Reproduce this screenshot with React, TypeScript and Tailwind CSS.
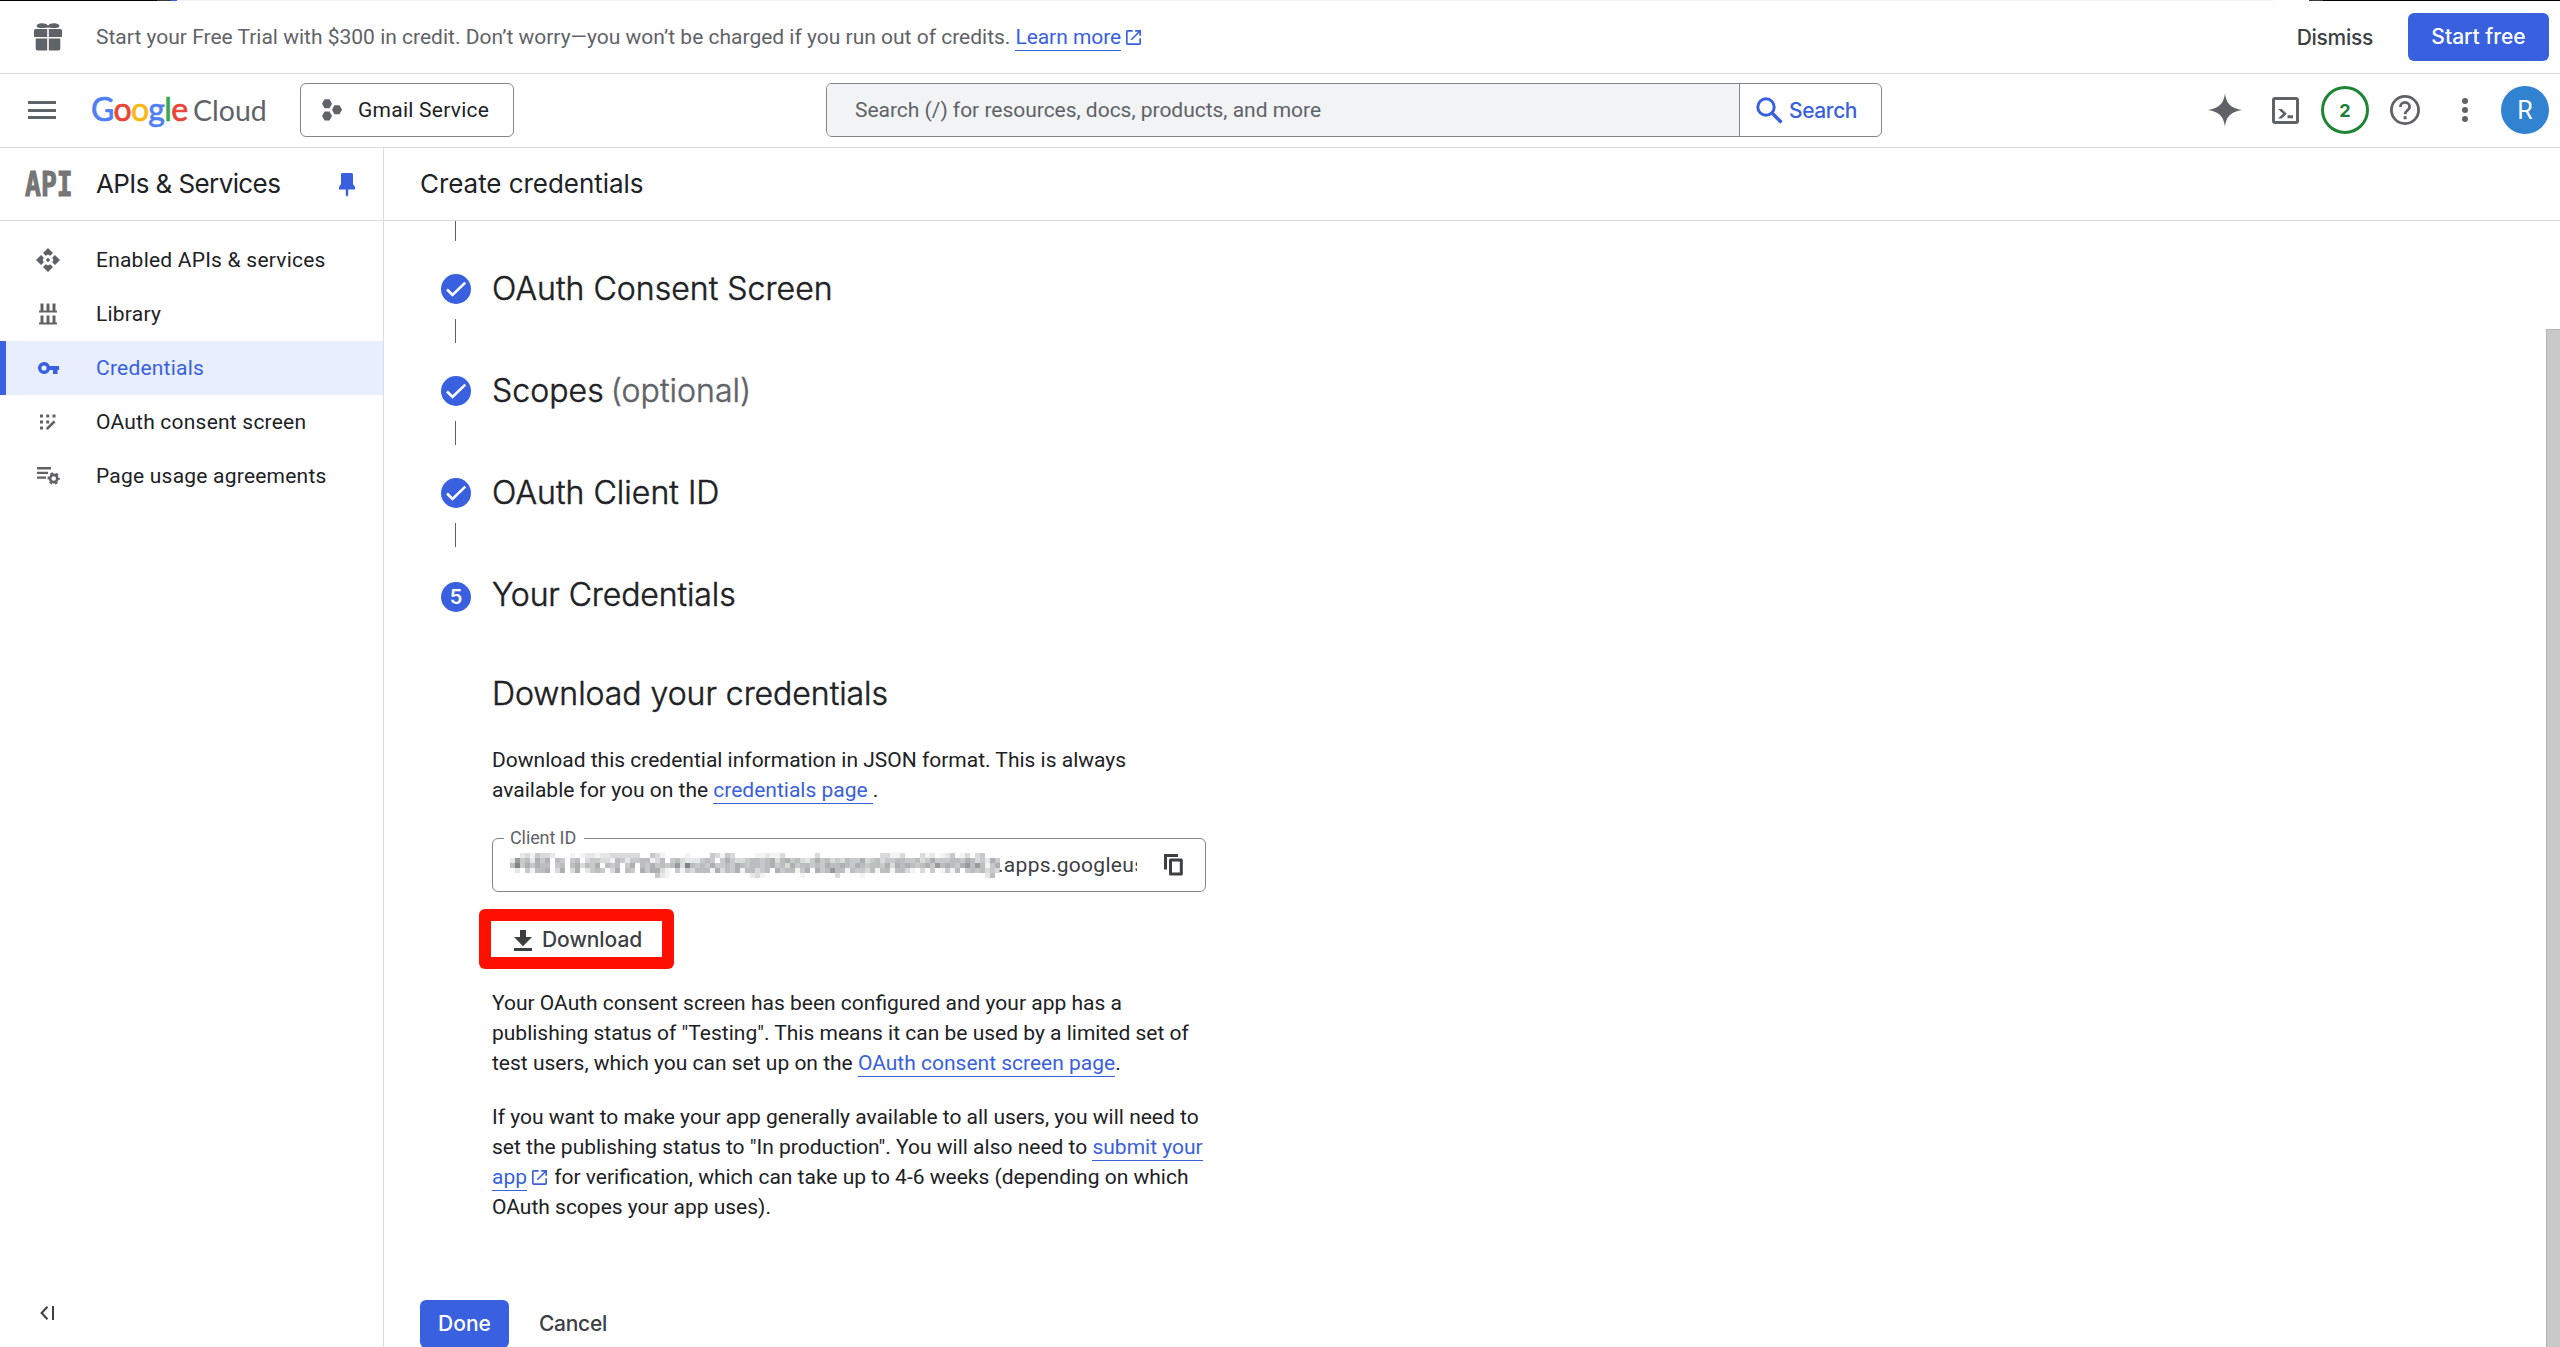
import React from "react";

const OpenInNew = ({ className = "" }: { className?: string }) => (
  <svg viewBox="0 0 18 18" className={"inline-block " + className} fill="currentColor">
    <path d="M2 0h6v2H2v14h14v-6h2v6a2 2 0 0 1-2 2H2a2 2 0 0 1-2-2V2a2 2 0 0 1 2-2z" />
    <path d="M11 0h7v7h-2V3.400L7 12.400 5.600 11l9-9H11z" />
  </svg>
);

const Gift = () => (
  <svg viewBox="0 0 28 28" className="h-7 w-7" fill="#5f6368">
    <path d="M14 4.600C12 5.200 3 5.600 2.600 3.600 2.500 1 5 .2 8 .2c3 0 4.600.8 6 2.200C15.400 1 17 .2 20 .2c3 0 5.500.8 5.400 3.400-.4 2-9.400 1.600-11.400 1z" />
    <path d="M1.500 6h11.700v8H0V7.500A1.500 1.500 0 0 1 1.500 6zM14.800 6h11.700A1.500 1.500 0 0 1 28 7.500V14H14.800zM1.700 15.600h11.500v12H3.700a2 2 0 0 1-2-2zM14.800 15.600h11.500v10a2 2 0 0 1-2 2h-9.500z" />
  </svg>
);

const Projects = () => (
  <svg viewBox="0 0 20 22" className="h-[22px] w-5" fill="#5f6368">
    <path d="M2.500.2h5L10 4.700 7.500 9.200h-5L0 4.700zM12.500 6.300h5l2.500 4.500-2.500 4.500h-5L10 10.800zM2.500 12.500h5L10 17l-2.500 4.500h-5L0 17z" />
  </svg>
);

const Pin = () => (
  <svg viewBox="0 0 16 24" className="mt-[2px] h-6 w-4" fill="#3860df">
    <path d="M3.500 0h9a1.500 1.500 0 0 1 1.500 1.500V11l2 3v2.500H9.200V22L8 24l-1.200-2v-5.500H0V14l2-3V1.500A1.500 1.500 0 0 1 3.500 0z" />
  </svg>
);

const ApiIcon = () => (
  <svg viewBox="0 0 24 24" className="h-6 w-6" fill="#5f6368">
    <path d="M12 0l5 5-2.800 2.800L12 6.600 9.800 7.800 7 5zM12 24l-5-5 2.800-2.800L12 17.400l2.200-1.200L17 19zM0 12l5-5 2.800 2.800L6.600 12l1.200 2.200L5 17zM24 12l-5 5-2.800-2.800 1.200-2.200-1.200-2.200L19 7zM12 9.800l2.200 2.200-2.200 2.200L9.800 12z" />
  </svg>
);

const LibraryIcon = () => (
  <svg viewBox="0 0 18 22" className="h-[22px] w-[18px]" fill="#5f6368">
    <path d="M1.500 0.500h3v7h-3zM7.500 0.500h3v7h-3zM13.500 0.500h3v7h-3zM0 7.500h18v2H0zM1.500 12.500h3v7h-3zM7.500 12.500h3v7h-3zM13.500 12.500h3v7h-3zM0 19.500h18v2H0z" />
  </svg>
);

const KeyIcon = () => (
  <svg viewBox="0 0 21 12" className="h-3 w-[21px]" fill="#3860df" fillRule="evenodd">
    <path d="M6 0a6 6 0 0 1 5.700 4H21v4h-1.500v4H15V8h-3.300A6 6 0 1 1 6 0zm0 3.400a2.600 2.600 0 1 0 0 5.200 2.600 2.600 0 0 0 0-5.200z" />
  </svg>
);

const ConsentIcon = () => (
  <svg viewBox="0 0 16 16" className="h-4 w-4" fill="#5f6368">
    <path d="M0 .5h3v3H0zM6.200 .5h3v3h-3zM12.500 .5h3v3h-3zM0 6.500h3v3H0zM6.200 6.500h3v3h-3zM0 12.500h3v3H0zM13.600 6.400l2 1.800-7.400 7.400H6.200v-1.900z" />
  </svg>
);

const AgreementsIcon = () => (
  <svg viewBox="0 0 23 18" className="h-[18px] w-[23px]" fill="#5f6368">
    <path d="M0 0h14v2.400H0zM0 4.700h11v2.400H0zM0 9.400h9v2.400H0z" />
    <circle cx="16.700" cy="11.500" r="3.600" fill="none" stroke="#5f6368" strokeWidth="2.600" />
    <circle cx="16.700" cy="11.500" r="5.300" fill="none" stroke="#5f6368" strokeWidth="1.800" strokeDasharray="2.800 2.750" strokeDashoffset="1.400" />
  </svg>
);

const navItems = [
  { label: "Enabled APIs & services", icon: <ApiIcon /> },
  { label: "Library", icon: <LibraryIcon /> },
  { label: "Credentials", icon: <KeyIcon />, active: true },
  { label: "OAuth consent screen", icon: <ConsentIcon /> },
  { label: "Page usage agreements", icon: <AgreementsIcon /> },
];

const CheckBadge = () => (
  <svg viewBox="0 0 30 30" className="h-[30px] w-[30px] shrink-0">
    <circle cx="15" cy="15" r="15" fill="#3860df" />
    <path d="M6 15.500l5.500 5.500L24.300 8.600" fill="none" stroke="#fff" strokeWidth="2.600" />
  </svg>
);

const steps: { title: string; note?: string }[] = [
  { title: "OAuth Consent Screen" },
  { title: "Scopes", note: "(optional)" },
  { title: "OAuth Client ID" },
];

/* Redacted part of the client id: every digit is the darkness of one 5px cell. */
const mosaic = [
  "00231433200010122122333333004310000100004314300001121130000003000000000000331130003120124013034000",
  "27452646054045034433154244551350453222454046433455456356453246453435446345344554453464445546534264",
  "58464655045056354605450460546454573854546445465455456453645545465565465455463656545647565467575146",
  "02041556036036024540360540646631041435551635461553450645514606457551544351551553103040141504545343",
  "00000000000000000000000000000421000000000000000023100000001000000300001000000000000000000000000250",
];
const shades = ["#ffffff", "#f3f3f4", "#e6e7e7", "#d9dada", "#c8c9ca", "#bcbdbe", "#aeafb1", "#98999b", "#828385"];

const Mosaic = () => (
  <svg viewBox="0 0 98 5" className="mt-px h-[25px] w-[490px] shrink-0" shapeRendering="crispEdges">
    {mosaic.map((row, y) =>
      row
        .slice(0, 98)
        .split("")
        .map((d, x) => (d === "0" ? null : <rect key={x + "-" + y} x={x} y={y} width="1" height="1" fill={shades[Number(d)]} />))
    )}
  </svg>
);

const Link = ({ children }: { children: React.ReactNode }) => (
  <a className="border-b border-[#3860df] pb-px whitespace-pre text-[#3860df]">{children}</a>
);

export default function App() {
  return (
    <div className="flex h-[1347px] w-full flex-col overflow-hidden bg-white font-['Roboto',sans-serif] text-[21px] text-[#202124]">
      <div className="flex h-px shrink-0">
        <div className="w-[157px] bg-black" />
        <div className="w-[14px] bg-[#3a3c40]" />
        <div className="w-[6px] bg-[#3860df]" />
        <div className="flex-1 bg-[#f1f2f3]" />
        <div className="w-[36px] bg-white" />
        <div className="w-[14px] bg-[#3a3c40]" />
        <div className="w-[237px] bg-black" />
      </div>

      <div className="flex h-[73px] shrink-0 items-center border-b border-[#dadce0] pr-[11px] pl-[34px]">
        <Gift />
        <div className="mt-px ml-[34px] flex flex-1 items-center text-[#5f6368]">
          <span className="mr-[5px] whitespace-pre">
            Start your Free Trial with $300 in credit. Don’t worry—you won’t be charged if you run out of credits.
          </span>
          <span className="border-b border-[#3860df] leading-[26px] tracking-[-0.05px] whitespace-pre text-[#3860df]">Learn more</span>
          <OpenInNew className="ml-[5px] h-[15px] w-[15px] text-[#3860df]" />
        </div>
        <span className="mt-px mr-[35px] font-['Inter',sans-serif] font-medium tracking-[-0.3px] text-[#3c4043]">Dismiss</span>
        <div className="flex h-12 w-[141px] items-center justify-center rounded-[6px] bg-[#3860df] font-['Inter',sans-serif] font-medium text-white">
          Start free
        </div>
      </div>

      <header className="flex h-[74px] shrink-0 items-center border-b border-[#dadce0] pr-[11px] pb-px pl-7">
        <div className="flex h-[18px] w-7 flex-col justify-between">
          <div className="h-[3px] bg-[#5f6368]" />
          <div className="h-[3px] bg-[#5f6368]" />
          <div className="h-[3px] bg-[#5f6368]" />
        </div>
        <div className="mb-[2px] ml-[35px] flex w-[209px] items-baseline font-['Lato',sans-serif] leading-[40px] whitespace-pre">
          <span className="w-[102px] text-[32px] tracking-[-0.7px]">
            <span className="text-[#4f7ff5] [-webkit-text-stroke:0.700px]">G</span>
            <span className="text-[#ea4335] [-webkit-text-stroke:0.700px]">o</span>
            <span className="text-[#f5b912] [-webkit-text-stroke:0.700px]">o</span>
            <span className="text-[#4f7ff5] [-webkit-text-stroke:0.700px]">g</span>
            <span className="text-[#34a853] [-webkit-text-stroke:0.700px]">l</span>
            <span className="text-[#ea4335] [-webkit-text-stroke:0.700px]">e</span>
          </span>
          <span className="text-[28.500px] text-[#5f6368]">Cloud</span>
        </div>
        <div className="flex h-[54px] w-[214px] items-center rounded-[6px] border border-[#80868b] pl-[21px]">
          <Projects />
          <span className="mt-px ml-4 tracking-[0.26px] whitespace-pre">Gmail Service</span>
        </div>
        <div className="ml-[312px] flex h-[54px] w-[1056px] overflow-hidden rounded-[6px] border border-[#80868b]">
          <div className="flex flex-1 items-center border-r border-[#80868b] bg-[#f1f3f4] pt-px pl-7 tracking-[-0.02px] whitespace-pre text-[#5f6368]">
            Search (/) for resources, docs, products, and more
          </div>
          <div className="flex w-[141px] items-center pl-4 text-[#3860df]">
            <svg viewBox="0 0 27 27" className="h-[27px] w-[27px]" fill="none" stroke="#3860df">
              <circle cx="10" cy="10" r="8.200" strokeWidth="3" />
              <path d="M16 16l9.500 9.500" strokeWidth="3.400" />
            </svg>
            <span className="mt-px ml-[6px] font-['Inter',sans-serif] font-medium tracking-[-0.4px]">Search</span>
          </div>
        </div>
        <div className="flex flex-1 items-center justify-end">
          <svg viewBox="0 0 34 34" className="h-[34px] w-[34px]" fill="#5f6368">
            <path d="M17 0c.8 7.500 3.500 15 17 17-13.500 2-16.200 9.500-17 17-.8-7.500-3.500-15-17-17 13.500-2 16.200-9.500 17-17z" />
            <path d="M17 4c2 7 5 11 13 13-8 2-11 6-13 13-2-7-5-11-13-13 8-2 11-6 13-13z" />
          </svg>
          <svg viewBox="0 0 27 27" className="mt-px ml-[30px] h-[27px] w-[27px]">
            <rect x="1.500" y="1.500" width="24" height="24" rx="1.500" fill="none" stroke="#5f6368" strokeWidth="3" />
            <path d="M6 12h3.800l5 4.700-5 4.700H6l5-4.700zM15.500 18.300H21v3h-5.500z" fill="#5f6368" />
          </svg>
          <div className="ml-[22px] flex h-12 w-12 items-center justify-center rounded-full border-[3px] border-[#1e8535] font-['Inter',sans-serif] text-[18px] font-bold text-[#188038]">
            2
          </div>
          <svg viewBox="0 0 30 30" className="ml-[21px] h-[30px] w-[30px]" fill="none" stroke="#5f6368">
            <circle cx="15" cy="15" r="13.600" strokeWidth="2.800" />
            <path d="M10.400 12a4.600 4.600 0 1 1 9.200 0c0 3.200-4.500 3.400-4.500 7.200" strokeWidth="2.800" />
            <path d="M13.600 21.200h3v3h-3z" fill="#5f6368" stroke="none" />
          </svg>
          <svg viewBox="0 0 6 24" className="ml-[42px] h-6 w-[6px]" fill="#5f6368">
            <circle cx="3" cy="3" r="3" />
            <circle cx="3" cy="12" r="3" />
            <circle cx="3" cy="21" r="3" />
          </svg>
          <div className="ml-[33px] flex h-12 w-12 items-center justify-center rounded-full bg-[#3182d1] pt-px text-[25px] text-white">R</div>
        </div>
      </header>

      <div className="flex min-h-0 flex-1">
        <aside className="flex w-[384px] shrink-0 flex-col border-r border-[#dadce0]">
          <div className="flex h-[73px] shrink-0 items-center border-b border-[#dadce0] pl-[25px]">
            <div className="w-[71px]">
              <span className="mt-[6px] inline-block origin-left scale-x-[0.8] font-['DejaVu_Sans_Mono',monospace] text-[33px] leading-none font-bold text-[#757575] [-webkit-text-stroke:1px_#757575]">API</span>
            </div>
            <span className="w-[243px] pb-px font-['Inter',sans-serif] text-[26px] tracking-[-0.600px] whitespace-pre">APIs &amp; Services</span>
            <Pin />
          </div>
          <nav className="mt-3 flex flex-1 flex-col">
            {navItems.map((item) => (
              <div
                key={item.label}
                className={
                  item.active
                    ? "flex h-[54px] items-center border-l-[6px] border-[#3860df] bg-[#e8eefe] text-[#3860df]"
                    : "flex h-[54px] items-center border-l-[6px] border-transparent"
                }
              >
                <div className="ml-[22px] flex w-[40px] justify-center">{item.icon}</div>
                <span className="mt-[2px] ml-7 tracking-[0.22px] whitespace-pre">{item.label}</span>
              </div>
            ))}
          </nav>
          <svg viewBox="0 0 14 14" className="mb-[27px] ml-10 h-[14px] w-[14px] shrink-0" fill="none" stroke="#3c4043" strokeWidth="2">
            <path d="M7.500 .8L1.600 7l5.900 6.200M13 0v14" />
          </svg>
        </aside>

        <main className="flex min-w-0 flex-1 flex-col">
          <div className="flex h-[73px] shrink-0 items-center border-b border-[#dadce0] pb-px pl-9 font-['Inter',sans-serif] text-[26px] tracking-[-0.05px] whitespace-pre">
            Create credentials
          </div>
          <div className="flex min-h-0 flex-1">
            <div className="flex flex-1 flex-col">
              <div className="flex flex-col pl-[57px]">
                <div className="mb-[33px] ml-[14px] h-5 w-px bg-[#5f6368]" />
                {steps.map((s) => (
                  <div key={s.title} className="flex h-[102px] flex-col">
                    <div className="flex h-[30px] items-center">
                      <CheckBadge />
                      <span className="ml-[21px] flex gap-[7px] font-['Inter',sans-serif] text-[32px] font-light tracking-[0.05px] whitespace-pre [-webkit-text-stroke:0.5px]">
                        <span>{s.title}</span>
                        {s.note && <span className="text-[#5f6368]">{s.note}</span>}
                      </span>
                    </div>
                    <div className="mt-[15px] ml-[14px] h-6 w-px bg-[#5f6368]" />
                  </div>
                ))}
                <div className="mt-[2px] flex h-[30px] items-center">
                  <div className="flex h-[30px] w-[30px] items-center justify-center rounded-full bg-[#3860df] font-['Inter',sans-serif] text-[20px] font-semibold text-white">
                    5
                  </div>
                  <span className="ml-[21px] pb-1 font-['Inter',sans-serif] text-[32px] font-light tracking-[-0.1px] whitespace-pre [-webkit-text-stroke:0.5px]">Your Credentials</span>
                </div>
              </div>

              <div className="ml-[108px] flex w-[714px] flex-col pt-[58px]">
                <h2 className="font-['Inter',sans-serif] text-[32px] leading-12 font-light tracking-[-0.04px] whitespace-pre [-webkit-text-stroke:0.5px]">Download your credentials</h2>
                <p className="mt-[27px] leading-[30px] whitespace-pre">
                  Download this credential information in JSON format. This is always
                  <br />
                  available for you on the <Link>credentials page </Link>.
                </p>
                <div className="relative mt-[33px] flex h-[54px] items-center rounded-[6px] border border-[#80868b] pr-[22px] pl-[17px]">
                  <span className="absolute -top-[13px] left-[11px] bg-white pr-2 pl-[6px] text-[18px] leading-6 tracking-[-0.1px] text-[#5f6368]">Client ID</span>
                  <div className="flex w-[627px] items-center overflow-hidden whitespace-pre text-[#3c4043]">
                    <Mosaic />
                    <span className="-ml-[2px] pt-px tracking-[0.3px]">.apps.googleus</span>
                  </div>
                  <svg viewBox="0 0 19 22" className="ml-auto h-[22px] w-[19px]" fill="none" stroke="#3c4043" strokeWidth="3">
                    <path d="M1.500 15.500v-14H14" />
                    <path d="M6.500 6h10.800v14H6.500z" strokeLinejoin="round" />
                  </svg>
                </div>
                <div className="mt-[17px] -ml-[13px] flex h-[60px] w-[195px] items-center rounded-[6px] bg-[#ff1000] px-3">
                  <div className="flex h-9 flex-1 items-center bg-white pl-[23px]">
                    <svg viewBox="0 0 18 21" className="mt-[2px] h-[21px] w-[18px]" fill="#3c4043">
                      <path d="M6 0h6v7h6l-9 9.300L0 7h6zM0 18h18v3H0z" />
                    </svg>
                    <span className="mt-[2px] ml-[10px] font-['Inter',sans-serif] font-medium tracking-[-0.05px] text-[#3c4043]">Download</span>
                  </div>
                </div>
                <p className="mt-[19px] leading-[30px] whitespace-pre">
                  Your OAuth consent screen has been configured and your app has a
                  <br />
                  publishing status of "Testing". This means it can be used by a limited set of
                  <br />
                  test users, which you can set up on the <Link>OAuth consent screen page</Link>.
                </p>
                <p className="mt-6 leading-[30px] whitespace-pre">
                  If you want to make your app generally available to all users, you will need to
                  <br />
                  set the publishing status to "In production". You will also need to <Link>submit your</Link>
                  <br />
                  <Link>app</Link>
                  <OpenInNew className="mr-[2px] ml-[5px] h-[15px] w-[15px] align-[-1px] text-[#3860df]" /> for verification, which can take up to 4-6 weeks (depending on which
                  <br />
                  OAuth scopes your app uses).
                </p>
              </div>

              <div className="mt-[78px] ml-9 flex shrink-0 items-center font-['Inter',sans-serif] font-medium">
                <div className="flex h-12 w-[89px] items-center justify-center rounded-[6px] bg-[#3860df] text-white">Done</div>
                <span className="ml-[30px] tracking-[-0.3px] text-[#3c4043]">Cancel</span>
              </div>
            </div>
            <div className="mt-[108px] w-[14px] border-t border-l border-[#b4b4b4] bg-[#c9c9c9]" />
          </div>
        </main>
      </div>
    </div>
  );
}
